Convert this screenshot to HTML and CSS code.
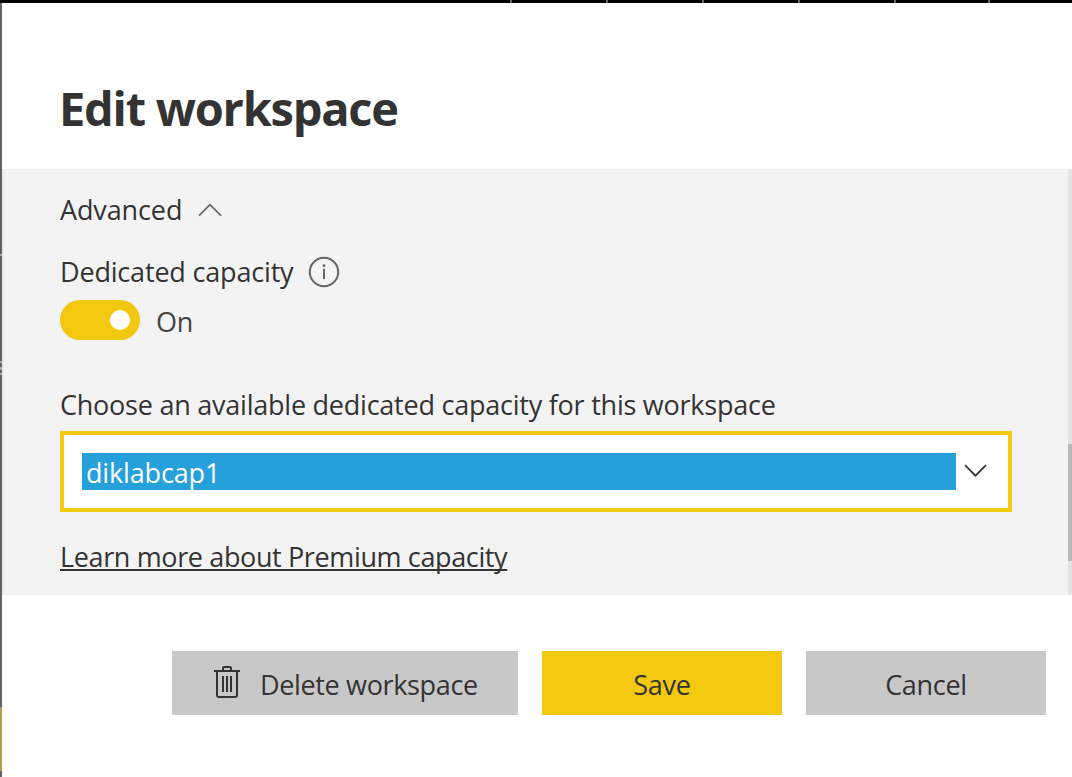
FILE: index.html
```html
<!DOCTYPE html>
<html lang="en">
<head>
<meta charset="utf-8">
<title>Edit workspace</title>
<link rel="stylesheet" href="styles.css">
</head>
<body>
<div class="top-strip"><i></i><i></i><i></i><i></i><i></i><i></i></div>
<div class="frame">
  <div class="backdrop"><i class="mark one"></i><i class="mark two"></i><i class="mark three"></i><i class="mark four"></i><i class="accent"></i></div>
  <main class="panel">
    <header class="panel-header"><h1 class="title"><span>Edit workspace</span></h1></header>
    <section class="panel-body">
      <div class="content">
        <div class="row advanced"><span class="t-advanced">Advanced</span>
          <svg class="chevron-up" width="24" height="14" viewBox="0 0 24 14"><path d="M1 12.7 12 1.7 23 12.7" fill="none" stroke="#666" stroke-width="1.8"/></svg>
        </div>
        <div class="row dedicated"><span class="t-dedicated">Dedicated capacity</span>
          <svg class="info" width="32" height="32" viewBox="0 0 32 32"><circle cx="16" cy="16" r="14.2" fill="none" stroke="#666" stroke-width="2"/><path d="M16 12.7V23" stroke="#666" stroke-width="2"/><circle cx="16" cy="9.7" r="1.4" fill="#666"/></svg>
        </div>
        <div class="toggle-row"><span class="toggle"><span class="knob"></span></span><span class="t-on">On</span></div>
        <div class="row choose"><span class="t-choose">Choose an available dedicated capacity for this workspace</span></div>
        <div class="select"><div class="selected"><span class="t-value">diklabcap1</span></div>
          <svg class="chevron-down" width="24" height="14" viewBox="0 0 24 14"><path d="M1 1.2 11.5 11.7 22 1.2" fill="none" stroke="#333" stroke-width="1.7"/></svg>
        </div>
        <div class="row learn"><a class="t-learn">Learn more about Premium capacity</a></div>
      </div>
      <div class="scrollbar"><div class="thumb"></div></div>
    </section>
    <footer class="actions">
      <div class="button delete">
        <svg class="trash" width="26" height="32" viewBox="0 0 26 32" fill="none" stroke="#333" stroke-width="2"><path d="M0 5H26M9 5V2.2Q9 1 10.2 1H15.8Q17 1 17 2.2V5M3 5V29Q3 31 5 31H21Q23 31 23 29V5M9 10V26M13 10V26M17 10V26"/></svg>
        <span class="t-delete">Delete workspace</span>
      </div>
      <div class="button save"><span class="t-save">Save</span></div>
      <div class="button cancel"><span class="t-cancel">Cancel</span></div>
    </footer>
  </main>
</div>
</body>
</html>
```
FILE: styles.css
```css
* { box-sizing: border-box; }
body { margin: 0; width: 1072px; height: 777px; overflow: hidden; background: #fff; color: #333; font-family: "Open Sans", "Noto Sans", sans-serif; font-size: 27px; line-height: 40px; }
svg { display: block; flex: none; }
.top-strip { height: 3px; background: #000; display: flex; gap: 94px; padding-left: 510px; }
.top-strip i { width: 2px; height: 3px; background: #666; flex: none; }
.top-strip i:last-child { margin-left: -2px; }
.frame { display: flex; height: 774px; }
.backdrop { width: 2px; background: #626262; display: flex; flex-direction: column; }
.mark { height: 2px; background: #aaa; }
.one { margin-top: 251px; }
.two { margin-top: 105px; }
.three { margin-top: 4px; height: 3px; }
.four { margin-top: 3px; }
.accent { height: 64px; margin-top: 332px; background: #b69d4e; }
.panel { width: 1070px; display: flex; flex-direction: column; }
.panel-header { height: 166px; padding: 72px 0 0 57px; }
.title { margin: 0; font-size: 47px; line-height: 66px; font-weight: 700; letter-spacing: -1.25px; white-space: nowrap; }
.panel-body { height: 426px; background: #f3f3f3; border-left: 2px solid #eaeaea; display: flex; justify-content: space-between; }
.content { width: 952px; margin-left: 56px; padding-top: 21px; white-space: nowrap; }
.row { display: flex; height: 40px; }
.t-advanced { letter-spacing: -0.12px; }
.t-dedicated { letter-spacing: -0.18px; }
.t-choose { letter-spacing: -0.236px; }
.t-value { letter-spacing: -0.15px; }
.t-delete { letter-spacing: -0.35px; }
.t-save, .t-cancel { letter-spacing: -0.3px; }
.chevron-up { margin: 13px 0 0 16px; }
.dedicated { margin-top: 22px; }
.info { margin: 4px 0 0 15px; }
.toggle-row { display: flex; height: 40px; margin-top: 8px; }
.toggle { width: 80px; height: 40px; border-radius: 20px; background: #f2c811; padding: 10px; display: flex; justify-content: flex-end; margin-right: 16px; }
.knob { width: 20px; height: 20px; border-radius: 50%; background: #fff; }
.t-on { padding-top: 2px; color: #444; letter-spacing: -0.3px; }
.choose { margin-top: 45px; }
.select { height: 81px; margin-top: 6px; border: 4px solid #f2c811; background: #fff; padding: 18px; display: flex; }
.selected { width: 874px; height: 37px; background: #26a0da; color: #fff; padding-left: 4px; }
.chevron-down { margin: 11px 0 0 8px; }
.learn { margin-top: 25px; }
.t-learn { letter-spacing: -0.37px; text-decoration: underline; text-decoration-thickness: 2px; text-underline-offset: 2px; text-decoration-skip-ink: none; }
.scrollbar { width: 4px; background: #e3e3e3; padding-top: 275px; }
.thumb { height: 117px; background: #b7b7b7; }
.actions { display: flex; gap: 24px; padding: 56px 0 0 170px; white-space: nowrap; }
.button { height: 64px; width: 240px; background: #c8c8c8; display: flex; justify-content: center; padding-top: 14px; }
.delete { width: 346px; justify-content: flex-start; padding-left: 42px; }
.save { background: #f2c811; }
.trash { margin: 1px 20px 0 0; }
```
